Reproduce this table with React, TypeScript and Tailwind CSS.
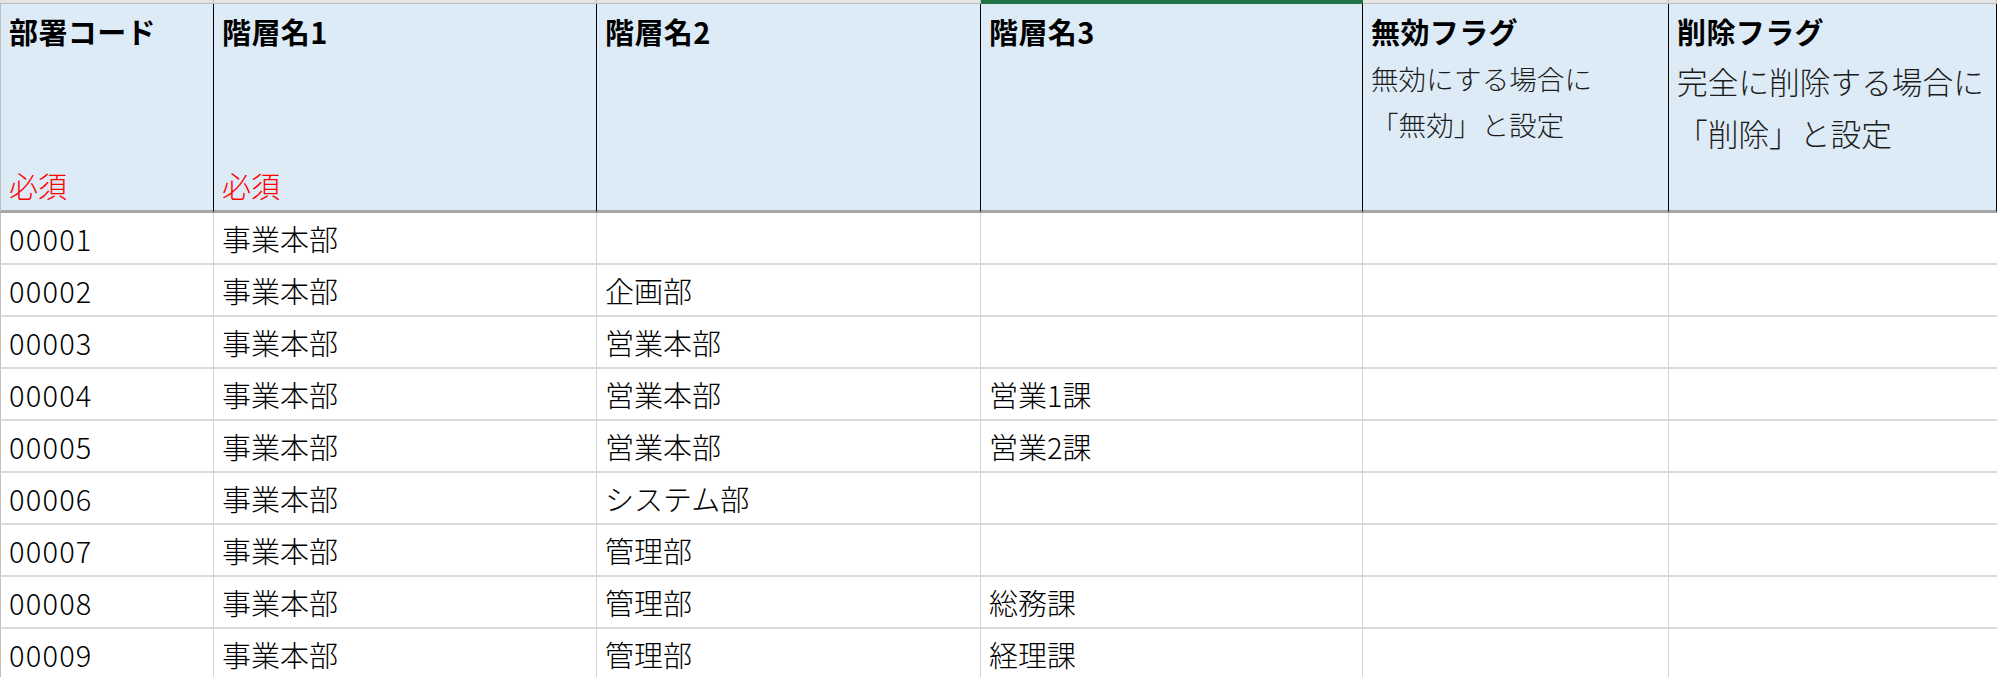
import React from 'react';

const FONT = '"Noto Sans CJK JP", "Noto Sans", sans-serif';

interface IColumn {
  title: string;
  width: string;
  required?: boolean;
  note?: string[];
  noteClass?: string;
}

const columns: IColumn[] = [
  { title: '部署コード', width: 'w-[214px]', required: true },
  { title: '階層名1', width: 'w-[383px]', required: true },
  { title: '階層名2', width: 'w-[384px]' },
  { title: '階層名3', width: 'w-[382px]' },
  {
    title: '無効フラグ',
    width: 'w-[306px]',
    note: ['無効にする場合に', '「無効」と設定'],
    noteClass: 'text-[27.6px] leading-[46px]',
  },
  {
    title: '削除フラグ',
    width: 'w-[328px]',
    note: ['完全に削除する場合に', '「削除」と設定'],
    noteClass: 'text-[30.7px] leading-[52px]',
  },
];

const rows = [
  ['00001', '事業本部', '', '', '', ''],
  ['00002', '事業本部', '企画部', '', '', ''],
  ['00003', '事業本部', '営業本部', '', '', ''],
  ['00004', '事業本部', '営業本部', '営業1課', '', ''],
  ['00005', '事業本部', '営業本部', '営業2課', '', ''],
  ['00006', '事業本部', 'システム部', '', '', ''],
  ['00007', '事業本部', '管理部', '', '', ''],
  ['00008', '事業本部', '管理部', '総務課', '', ''],
  ['00009', '事業本部', '管理部', '経理課', '', ''],
];

function TopStrip() {
  return (
    <div className="flex h-[4px]">
      {columns.map((col, i) => (
        <div
          key={i}
          className={`${col.width} shrink-0 ${i === 3
            ? 'bg-[#217346]'
            : 'bg-[#e4e4e4] border-b border-r border-[#bdbdbd]'}`}
        />
      ))}
    </div>
  );
}

function HeaderCell({ col, index }: { col: IColumn; index: number }) {
  return (
    <div
      className={`${col.width} shrink-0 h-[209px] flex flex-col bg-[#ddebf7] pl-2 pt-[9px] pb-[7px]
        border-r border-b-[3px] border-r-black border-b-[#a6a6a6] ${index === 0 && 'border-l border-l-[#bfbfbf]'}`}
    >
      <div className="text-[29px] leading-[36px] font-bold text-black whitespace-nowrap tracking-[0.4px]">{col.title}</div>

      {col.note && (
        <div className={`mt-[6px] font-light text-[#1c1c1c] whitespace-nowrap ${col.noteClass}`}>
          {col.note.map((line) => <div key={line}>{line}</div>)}
        </div>
      )}

      {col.required && (
        <div className="mt-auto text-[29px] leading-[36px] font-light text-[#ff0000]">必須</div>
      )}
    </div>
  );
}

function DataRow({ cells }: { cells: string[] }) {
  return (
    <div className="flex">
      {cells.map((value, i) => (
        <div
          key={i}
          className={`${columns[i].width} shrink-0 h-[52px] flex items-center pl-2 text-[29px] leading-none font-light text-black
            border-b-2 border-b-[#dadada] ${i < cells.length - 1 && 'border-r border-r-[#d4d4d4]'}
            ${i === 0 && 'border-l border-l-[#bfbfbf] tracking-[1.2px]'}`}
        >
          {value}
        </div>
      ))}
    </div>
  );
}

export default function App() {
  return (
    <div className="w-[2000px] h-[677px] overflow-hidden bg-white" style={{ fontFamily: FONT }}>
      <TopStrip />

      {/* Header */}
      <div className="flex">
        {columns.map((col, i) => <HeaderCell key={i} col={col} index={i} />)}
      </div>

      {/* Rows */}
      {rows.map((cells, i) => <DataRow key={i} cells={cells} />)}
    </div>
  );
}
